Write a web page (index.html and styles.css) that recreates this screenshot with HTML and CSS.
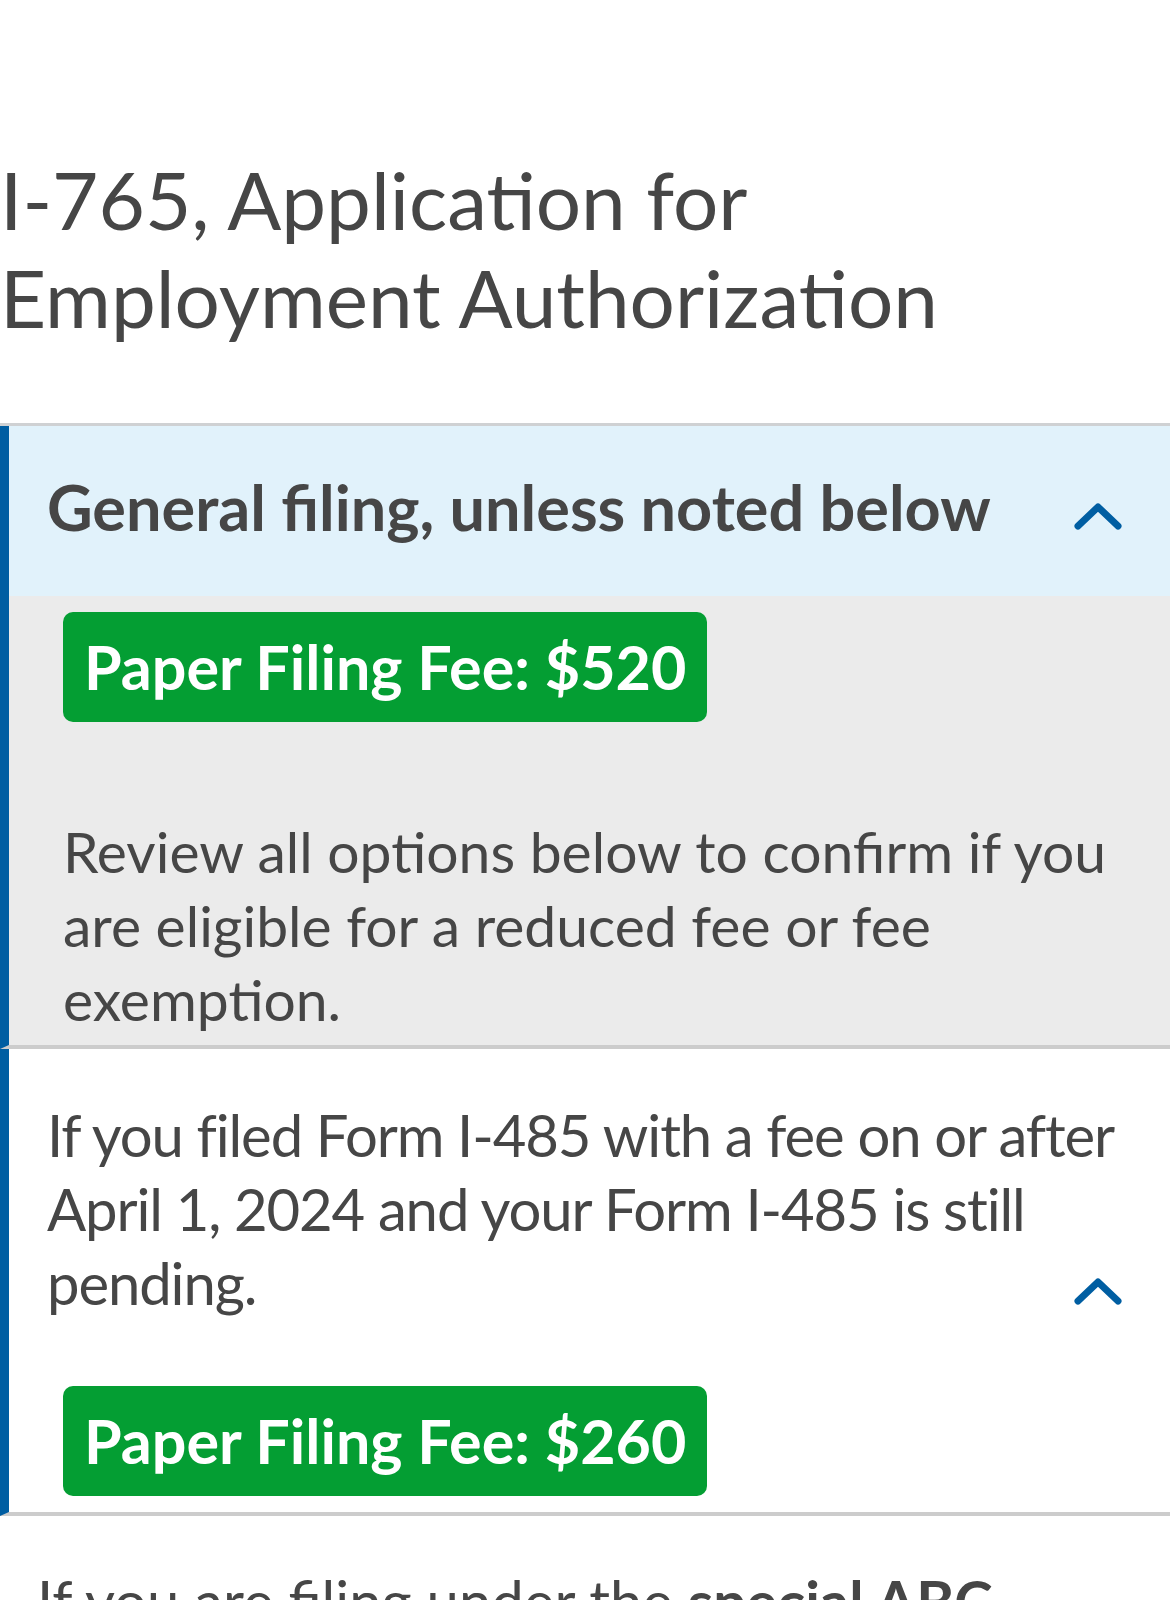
FILE: index.html
```html
<!DOCTYPE html>
<html lang="en">
<head>
<meta charset="utf-8">
<title>I-765 Fees</title>
<link rel="stylesheet" href="styles.css">
</head>
<body>
<main class="page">
  <h1 class="title">I-765, Application for Employment Authorization</h1>
  <div class="accordion">
    <section class="acc-item">
      <div class="acc-head acc-head--open">
        <h2 class="acc-label acc-label--bold">General filing, unless noted below</h2>
        <svg class="chev chev--first" viewBox="0 0 48 27" width="48" height="27"><path d="M4 23 L24 4 L44 23" fill="none" stroke="#005ea2" stroke-width="7" stroke-linecap="round" stroke-linejoin="round"/></svg>
      </div>
      <div class="acc-body">
        <div class="fee">Paper Filing Fee: $520</div>
        <p class="note">Review all options below to confirm if you are eligible for a reduced fee or fee exemption.</p>
      </div>
    </section>
    <section class="acc-item">
      <div class="acc-head acc-head--plain">
        <h2 class="acc-label acc-label--tight">If you filed Form I-485 with a fee on or after April 1, 2024 and your Form I-485 is still pending.</h2>
        <svg class="chev chev--second" viewBox="0 0 48 27" width="48" height="27"><path d="M4 23 L24 4 L44 23" fill="none" stroke="#005ea2" stroke-width="7" stroke-linecap="round" stroke-linejoin="round"/></svg>
      </div>
      <div class="acc-body acc-body--white">
        <div class="fee">Paper Filing Fee: $260</div>
      </div>
    </section>
  </div>
  <p class="next">If you are filing under the <strong>special ABC</strong> settlement agreement</p>
</main>
</body>
</html>
```
FILE: styles.css
```css
html, body {
  margin: 0;
  padding: 0;
  background: #ffffff;
}
body {
  font-family: Lato, "Open Sans", sans-serif;
  color: #464646;
  overflow: hidden;
  height: 1600px;
}
.page {
  padding-top: 150px;
}
.title {
  margin: 0;
  font-weight: 400;
  font-size: 80px;
  line-height: 98px;
  color: #464646;
  padding-bottom: 77px;
}
.accordion {
  border-top: 3px solid #cfd1d3;
}
.acc-item {
  border-left: 9px solid #005ea2;
  border-bottom: 4px solid #cccccc;
}
.acc-head {
  position: relative;
  padding: 43px 10px 52px 38px;
}
.acc-head--open {
  background: #e1f2fb;
}
.acc-head--plain {
  padding-top: 49px;
  padding-bottom: 0;
}
.acc-label {
  margin: 0;
  font-size: 58px;
  line-height: 74px;
  font-weight: 400;
  color: #464646;
}
.acc-label--tight {
  letter-spacing: -1.1px;
}
.acc-label--bold {
  font-size: 63px;
  line-height: 75px;
  font-weight: 700;
}
.chev {
  position: absolute;
  right: 48px;
}
.chev--first {
  bottom: 66px;
}
.chev--second {
  bottom: 15px;
}
.acc-body {
  background: #ebebeb;
  padding: 16px 20px 9px 54px;
}
.acc-body--white {
  background: #ffffff;
  padding-top: 66px;
  padding-bottom: 16px;
}
.fee {
  display: inline-block;
  vertical-align: top;
  background: #049e33;
  color: #ffffff;
  font-size: 61px;
  font-weight: 700;
  line-height: 110px;
  padding: 0 21px;
  border-radius: 10px;
}
.note {
  margin: 92px 0 0;
  font-size: 57px;
  line-height: 74px;
}
.next {
  margin: 48px 0 0 37px;
  font-size: 58px;
  line-height: 74px;
}
```
